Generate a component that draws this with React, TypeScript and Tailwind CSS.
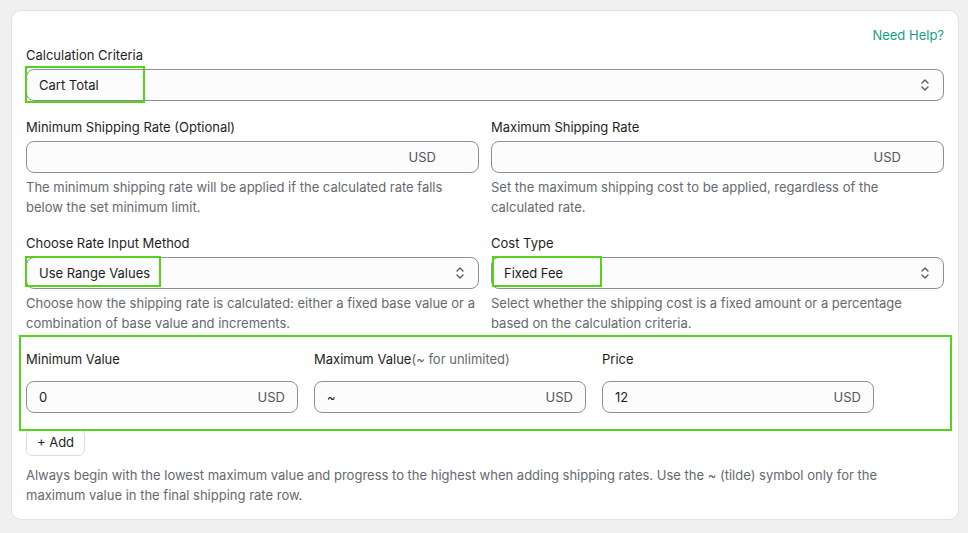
import React from "react";

const Chevrons = () => (
  <svg width="10" height="14" viewBox="0 0 10 14" fill="none" stroke="#50575e" strokeWidth="1.3" strokeLinecap="round" strokeLinejoin="round">
    <path d="M2 5 L5 2 L8 5" />
    <path d="M2 9 L5 12 L8 9" />
  </svg>
);

const Highlight = ({ cls }: { cls: string }) => (
  <span className={`pointer-events-none absolute border-[2.5px] border-[#55d21c] ${cls}`} />
);

function Select({ value, hl }: { value: string; hl: string }) {
  return (
    <div className="relative">
      <div className="flex h-[32px] items-center justify-between rounded-[8px] border border-[#8c8f94] bg-[#fcfcfc] pl-[12px] pr-[13px] text-[13px] text-[#1e1e1e]">
        <span className="pt-[1px]">{value}</span>
        <Chevrons />
      </div>
      <Highlight cls={hl} />
    </div>
  );
}

function MoneyInput({ value, pr }: { value?: string; pr: string }) {
  return (
    <div className={`flex h-[32px] items-center justify-between rounded-[8px] border border-[#8c8f94] bg-[#fcfcfc] pl-[12px] ${pr} text-[13px]`}>
      <span className="pt-[1px] text-[#1e1e1e]">{value ?? ""}</span>
      <span className="pt-[1px] text-[#50575e]">USD</span>
    </div>
  );
}

export default function App() {
  return (
    <div className="min-h-[533px] bg-[#f0f0f1] pl-[11px] pr-[9px] pt-[10px] text-[#1e1e1e]" style={{ fontFamily: "Inter, 'Noto Sans', sans-serif" }}>
      <div className="rounded-[10px] border border-[#e2e2e4] bg-white px-[14px] pb-[14px] pt-[14px]">
        <div className="flex h-[20px] items-center justify-end text-[13px] leading-[20px] text-[#17a086]">Need Help?</div>

        <div className="text-[13px] leading-[20px]">Calculation Criteria</div>
        <div className="mt-[4px]">
          <Select value="Cart Total" hl="left-[-1px] top-[-3px] h-[37px] w-[120px]" />
        </div>

        <div className="mt-[16px] grid grid-cols-2 gap-x-[12px]">
          <div>
            <div className="text-[13px] leading-[20px]">Minimum Shipping Rate (Optional)</div>
            <div className="mt-[4px]"><MoneyInput pr="pr-[42px]" /></div>
            <p className="mt-[4px] text-[13px] leading-[20px] text-[#646970]">The minimum shipping rate will be applied if the calculated rate falls below the set minimum limit.</p>
          </div>
          <div>
            <div className="text-[13px] leading-[20px]">Maximum Shipping Rate</div>
            <div className="mt-[4px]"><MoneyInput pr="pr-[42px]" /></div>
            <p className="mt-[4px] max-w-[430px] text-[13px] leading-[20px] text-[#646970]">Set the maximum shipping cost to be applied, regardless of the calculated rate.</p>
          </div>
        </div>

        <div className="mt-[16px] grid grid-cols-2 gap-x-[12px]">
          <div>
            <div className="text-[13px] leading-[20px]">Choose Rate Input Method</div>
            <div className="mt-[4px]">
              <Select value="Use Range Values" hl="left-[-1px] top-[-1px] h-[31px] w-[136px]" />
            </div>
            <p className="mt-[4px] text-[13px] leading-[20px] text-[#646970]">Choose how the shipping rate is calculated: either a fixed base value or a combination of base value and increments.</p>
          </div>
          <div>
            <div className="text-[13px] leading-[20px]">Cost Type</div>
            <div className="mt-[4px]">
              <Select value="Fixed Fee" hl="left-[1px] top-[-1px] h-[31px] w-[110px]" />
            </div>
            <p className="mt-[4px] max-w-[430px] text-[13px] leading-[20px] text-[#646970]">Select whether the shipping cost is a fixed amount or a percentage based on the calculation criteria.</p>
          </div>
        </div>

        <div className="relative mt-[2px] pb-[16px] pt-[14px]">
          <div className="flex gap-[16px]">
            <div className="w-[272px]">
              <div className="text-[13px] leading-[20px]">Minimum Value</div>
              <div className="mt-[12px]"><MoneyInput value="0" pr="pr-[12px]" /></div>
            </div>
            <div className="w-[272px]">
              <div className="text-[13px] leading-[20px]">
                Maximum Value<span className="text-[#646970]">(~ for unlimited)</span>
              </div>
              <div className="mt-[12px]"><MoneyInput value="~" pr="pr-[12px]" /></div>
            </div>
            <div className="w-[272px]">
              <div className="text-[13px] leading-[20px]">Price</div>
              <div className="mt-[12px]"><MoneyInput value="12" pr="pr-[12px]" /></div>
            </div>
          </div>
          <Highlight cls="left-[-7px] right-[-8px] top-0 bottom-[-2px]" />
        </div>

        <button className="h-[27px] w-[59px] rounded-[6px] border border-[#dcdcde] bg-white text-[13px] text-[#1e1e1e]">+ Add</button>

        <p className="mt-[9px] max-w-[900px] text-[13px] leading-[20px] text-[#646970]">Always begin with the lowest maximum value and progress to the highest when adding shipping rates. Use the ~ (tilde) symbol only for the maximum value in the final shipping rate row.</p>
      </div>
    </div>
  );
}
